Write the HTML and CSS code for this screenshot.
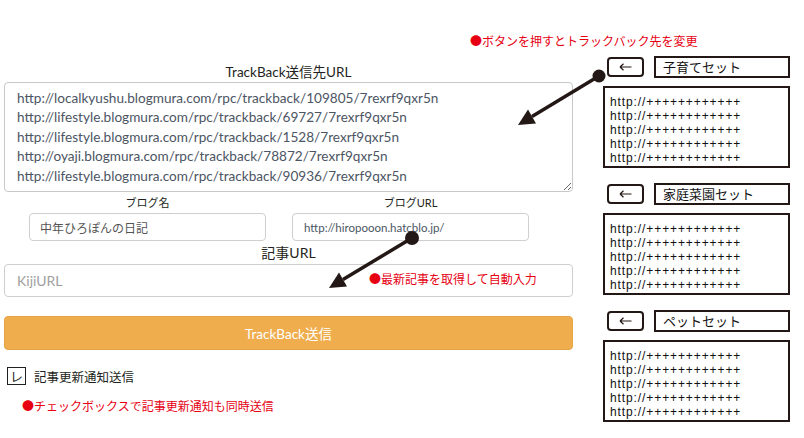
FILE: index.html
```html
<!DOCTYPE html>
<html lang="ja">
<head>
<meta charset="utf-8">
<title>TrackBack送信</title>
<link rel="stylesheet" href="styles.css">
</head>
<body>
<div class="page">
  <div class="top-note"><span class="note">●ボタンを押すとトラックバック先を変更</span></div>
  <div class="main">
    <div class="form">
      <div class="label label-tb">TrackBack送信先URL</div>
      <textarea class="urls" spellcheck="false">http://localkyushu.blogmura.com/rpc/trackback/109805/7rexrf9qxr5n
http://lifestyle.blogmura.com/rpc/trackback/69727/7rexrf9qxr5n
http://lifestyle.blogmura.com/rpc/trackback/1528/7rexrf9qxr5n
http://oyaji.blogmura.com/rpc/trackback/78872/7rexrf9qxr5n
http://lifestyle.blogmura.com/rpc/trackback/90936/7rexrf9qxr5n</textarea>
      <div class="blog-row">
        <div class="field">
          <div class="label label-sm">ブログ名</div>
          <div class="input input-sm">中年ひろぽんの日記</div>
        </div>
        <div class="field">
          <div class="label label-sm">ブログURL</div>
          <div class="input input-sm input-url">http://hiropooon.hatcblo.jp/</div>
        </div>
      </div>
      <div class="label label-kiji">記事URL</div>
      <div class="kiji-wrap">
        <div class="input input-kiji"><span class="placeholder">KijiURL</span></div>
        <span class="note note-kiji">●最新記事を取得して自動入力</span>
      </div>
      <div class="button">TrackBack送信</div>
      <div class="check-row">
        <span class="checkbox">レ</span>
        <span class="check-label">記事更新通知送信</span>
      </div>
      <div class="note note-check">●チェックボックスで記事更新通知も同時送信</div>
    </div>
    <div class="sets">
      <div class="set">
        <div class="set-head">
          <span class="back"><svg width="13" height="8" viewBox="0 0 13 8"><path d="M1 4H12.5M1 4L4.5 0.8M1 4L4.5 7.2" fill="none" stroke="#231815" stroke-width="1.2"/></svg></span>
          <span class="set-name">子育てセット</span>
        </div>
        <div class="set-list">
          <div class="set-line">http://++++++++++++</div>
          <div class="set-line">http://++++++++++++</div>
          <div class="set-line">http://++++++++++++</div>
          <div class="set-line">http://++++++++++++</div>
          <div class="set-line">http://++++++++++++</div>
        </div>
      </div>
      <div class="set">
        <div class="set-head">
          <span class="back"><svg width="13" height="8" viewBox="0 0 13 8"><path d="M1 4H12.5M1 4L4.5 0.8M1 4L4.5 7.2" fill="none" stroke="#231815" stroke-width="1.2"/></svg></span>
          <span class="set-name">家庭菜園セット</span>
        </div>
        <div class="set-list">
          <div class="set-line">http://++++++++++++</div>
          <div class="set-line">http://++++++++++++</div>
          <div class="set-line">http://++++++++++++</div>
          <div class="set-line">http://++++++++++++</div>
          <div class="set-line">http://++++++++++++</div>
        </div>
      </div>
      <div class="set">
        <div class="set-head">
          <span class="back"><svg width="13" height="8" viewBox="0 0 13 8"><path d="M1 4H12.5M1 4L4.5 0.8M1 4L4.5 7.2" fill="none" stroke="#231815" stroke-width="1.2"/></svg></span>
          <span class="set-name">ペットセット</span>
        </div>
        <div class="set-list">
          <div class="set-line">http://++++++++++++</div>
          <div class="set-line">http://++++++++++++</div>
          <div class="set-line">http://++++++++++++</div>
          <div class="set-line">http://++++++++++++</div>
          <div class="set-line">http://++++++++++++</div>
        </div>
      </div>
    </div>
  </div>
  <svg class="arrows" width="804" height="438" viewBox="0 0 804 438">
    <g fill="#231815" stroke="#231815">
      <line x1="599" y1="76" x2="532" y2="116.5" stroke-width="3.5"/>
      <circle cx="599" cy="76" r="6.5" stroke="none"/>
      <polygon points="518,125 536,123.5 528,109.5" stroke="none"/>
      <line x1="412" y1="238" x2="343" y2="279.5" stroke-width="3.5"/>
      <circle cx="412" cy="238" r="7" stroke="none"/>
      <polygon points="329,288 347,286.5 339,272.5" stroke="none"/>
    </g>
  </svg>
</div>
</body>
</html>
```
FILE: styles.css
```css
* { box-sizing: border-box; }
html, body { margin: 0; padding: 0; background: #fff; }
body {
  font-family: Lato, "Noto Sans CJK JP", sans-serif;
  color: #231f20;
}
.page {
  position: relative;
  width: 804px;
  height: 438px;
  overflow: hidden;
}
.note {
  color: #e60012;
  font-family: "Noto Sans CJK JP", sans-serif;
  font-size: 12px;
  line-height: 14px;
  white-space: nowrap;
}
.top-note {
  height: 56px;
  padding-top: 33px;
  padding-left: 470px;
  line-height: 14px;
}
.main {
  display: flex;
  align-items: flex-start;
}
.form {
  width: 569px;
  margin-left: 4px;
}
.label {
  text-align: center;
  color: #231f20;
}
.label-tb {
  font-size: 13.5px;
  line-height: 18px;
  margin-top: 7px;
  margin-bottom: 1px;
}
.urls {
  display: block;
  width: 569px;
  height: 110px;
  margin: 0;
  padding: 6px 12px;
  border: 1px solid #c8c8c8;
  border-radius: 4px;
  font-family: Lato, sans-serif;
  font-size: 13.6px;
  line-height: 19.4px;
  color: #4c5563;
  resize: both;
  overflow: hidden;
  white-space: pre;
  outline: none;
}
.blog-row {
  display: flex;
  gap: 26px;
  padding-left: 25px;
  margin-top: 3px;
}
.field { width: 237px; }
.label-sm {
  font-size: 11px;
  line-height: 16px;
  margin-bottom: 2px;
}
.input {
  border: 1px solid #cfcfcf;
  border-radius: 4px;
  background: #fff;
  display: flex;
  align-items: center;
}
.input-sm {
  height: 28px;
  padding-left: 10px;
  font-family: "Noto Sans CJK JP", sans-serif;
  font-size: 12px;
  color: #555;
}
.input-url {
  padding-left: 11px;
  font-family: Lato, "Noto Sans CJK JP", sans-serif;
  font-size: 11.5px;
  color: #4c5563;
}
.label-kiji {
  font-size: 14px;
  line-height: 20px;
  margin-top: 2px;
  margin-bottom: 1px;
}
.kiji-wrap { position: relative; }
.input-kiji {
  height: 33px;
  padding-left: 12px;
  font-size: 14px;
}
.placeholder { color: #a0a0a0; }
.note-kiji {
  position: absolute;
  left: 365px;
  top: 8px;
}
.button {
  margin-top: 19px;
  height: 34px;
  border-radius: 4px;
  background: #efad4d;
  border: 1px solid #e6a443;
  color: #fff;
  font-size: 13.5px;
  display: flex;
  align-items: center;
  justify-content: center;
}
.check-row {
  display: flex;
  align-items: center;
  margin-top: 17px;
  margin-left: 3px;
  height: 18px;
}
.checkbox {
  width: 19px;
  height: 18px;
  border: 1.5px solid #231f20;
  font-family: "Noto Sans CJK JP", sans-serif;
  font-size: 13px;
  line-height: 15px;
  text-align: center;
  color: #231f20;
}
.check-label {
  margin-left: 8px;
  font-family: "Noto Sans CJK JP", sans-serif;
  font-size: 12.5px;
  color: #231f20;
}
.note-check {
  display: block;
  margin-top: 14px;
  padding-left: 18px;
}
.sets {
  width: 187px;
  margin-left: 30px;
  display: flex;
  flex-direction: column;
  gap: 15px;
  font-family: "Noto Sans CJK JP", sans-serif;
  color: #111;
}
.set-head {
  display: flex;
  align-items: center;
  height: 22px;
  padding-left: 4px;
  gap: 10px;
}
.back {
  width: 37px;
  height: 20px;
  border: 2px solid #231815;
  border-radius: 4px;
  display: flex;
  align-items: center;
  justify-content: center;
}
.back svg { display: block; }
.set-name {
  width: 136px;
  height: 22px;
  border: 2px solid #231815;
  padding-left: 7px;
  font-size: 13px;
  line-height: 18px;
}
.set-list {
  margin-top: 8px;
  height: 82px;
  border: 2px solid #231815;
  padding: 7px 5px 1px;
}
.set-line {
  height: 14px;
  font-family: "Liberation Sans", sans-serif;
  font-size: 12px;
  letter-spacing: 0.9px;
  line-height: 14px;
  white-space: nowrap;
  color: #111;
}
.arrows {
  position: absolute;
  left: 0;
  top: 0;
  pointer-events: none;
}
```
